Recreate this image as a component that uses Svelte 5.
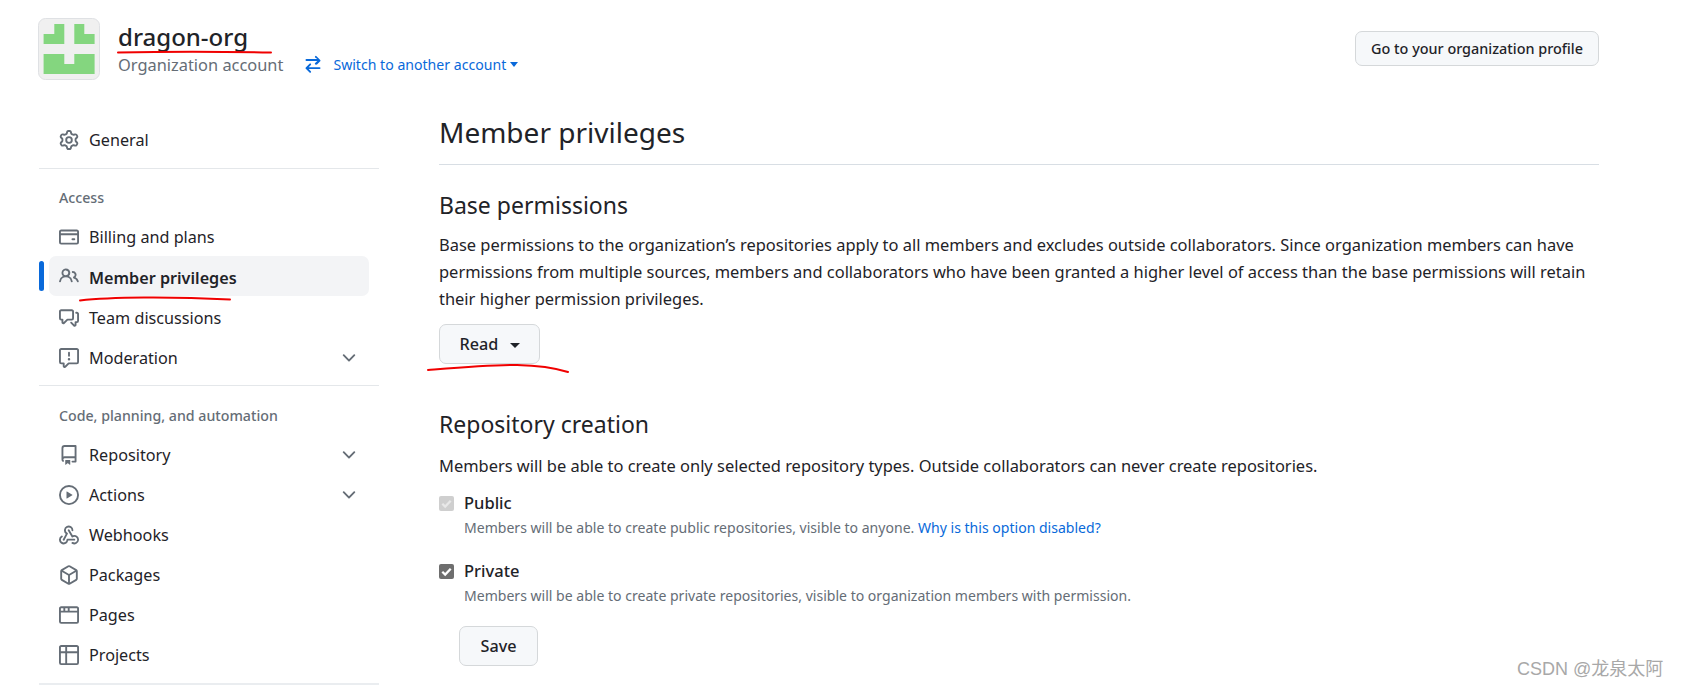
<script>
  const icons = {
    gear: 'M8 0a8.2 8.2 0 0 1 .701.031C9.444.095 9.99.645 10.16 1.29l.288 1.107c.018.066.079.158.212.224.231.114.454.243.668.386.123.082.233.09.299.071l1.103-.303c.644-.176 1.392.021 1.82.63.27.385.506.792.704 1.218.315.675.111 1.422-.364 1.891l-.814.806c-.049.048-.098.147-.088.294.016.257.016.515 0 .772-.01.147.038.246.088.294l.814.806c.475.469.679 1.216.364 1.891a7.977 7.977 0 0 1-.704 1.217c-.428.61-1.176.807-1.82.63l-1.102-.302c-.067-.019-.177-.011-.3.071a5.909 5.909 0 0 1-.668.386c-.133.066-.194.158-.211.224l-.29 1.106c-.168.646-.715 1.196-1.458 1.26a8.006 8.006 0 0 1-1.402 0c-.743-.064-1.289-.614-1.458-1.26l-.289-1.106c-.018-.066-.079-.158-.212-.224a5.738 5.738 0 0 1-.668-.386c-.123-.082-.233-.09-.299-.071l-1.103.303c-.644.176-1.392-.021-1.82-.63a8.12 8.12 0 0 1-.704-1.218c-.315-.675-.111-1.422.363-1.891l.815-.806c.05-.048.098-.147.088-.294a6.214 6.214 0 0 1 0-.772c.01-.147-.038-.246-.088-.294l-.815-.806C.635 6.045.431 5.298.746 4.623a7.92 7.92 0 0 1 .704-1.217c.428-.61 1.176-.807 1.82-.63l1.102.302c.067.019.177.011.3-.071.214-.143.437-.272.668-.386.133-.066.194-.158.211-.224l.29-1.106C6.009.645 6.556.095 7.299.03 7.53.01 7.764 0 8 0Zm-.571 1.525c-.036.003-.108.036-.137.146l-.289 1.105c-.147.561-.549.967-.998 1.189-.173.086-.34.183-.5.29-.417.278-.97.423-1.529.27l-1.103-.303c-.109-.03-.175.016-.195.045-.22.312-.412.644-.573.99-.014.031-.021.11.059.19l.815.806c.411.406.562.957.53 1.456a4.709 4.709 0 0 0 0 .582c.032.499-.119 1.05-.53 1.456l-.815.806c-.081.08-.073.159-.059.19.162.346.353.677.573.989.02.03.085.076.195.046l1.102-.303c.56-.153 1.113-.008 1.53.27.161.107.328.204.501.29.447.222.85.629.997 1.189l.289 1.105c.029.109.101.143.137.146a6.6 6.6 0 0 0 1.142 0c.036-.003.108-.036.137-.146l.289-1.105c.147-.561.549-.967.998-1.189.173-.086.34-.183.5-.29.417-.278.97-.423 1.529-.27l1.103.303c.109.029.175-.016.195-.045.22-.313.411-.644.573-.99.014-.031.021-.11-.059-.19l-.815-.806c-.411-.406-.562-.957-.53-1.456a4.709 4.709 0 0 0 0-.582c-.032-.499.119-1.05.53-1.456l.815-.806c.081-.08.073-.159.059-.19a6.464 6.464 0 0 0-.573-.989c-.02-.03-.085-.076-.195-.046l-1.102.303c-.56.153-1.113.008-1.53-.27a4.44 4.44 0 0 0-.501-.29c-.447-.222-.85-.629-.997-1.189l-.289-1.105c-.029-.11-.101-.143-.137-.146a6.6 6.6 0 0 0-1.142 0ZM11 8a3 3 0 1 1-6 0 3 3 0 0 1 6 0ZM9.5 8a1.5 1.5 0 1 0-3.001.001A1.5 1.5 0 0 0 9.5 8Z',
    card: 'M10.75 9a.75.75 0 0 0 0 1.5h1.5a.75.75 0 0 0 0-1.5h-1.5ZM0 3.75C0 2.784.784 2 1.75 2h12.5c.966 0 1.75.784 1.75 1.75v8.5A1.75 1.75 0 0 1 14.25 14H1.75A1.75 1.75 0 0 1 0 12.25ZM14.5 6.5h-13v5.75c0 .138.112.25.25.25h12.5a.25.25 0 0 0 .25-.25Zm0-2.75a.25.25 0 0 0-.25-.25H1.75a.25.25 0 0 0-.25.25V5h13Z',
    people: 'M2 5.5a3.5 3.5 0 1 1 5.898 2.549 5.508 5.508 0 0 1 3.034 4.084.75.75 0 1 1-1.482.235 4 4 0 0 0-7.9 0 .75.75 0 0 1-1.482-.236A5.507 5.507 0 0 1 3.102 8.05 3.493 3.493 0 0 1 2 5.5ZM11 4a3.001 3.001 0 0 1 2.22 5.018 5.01 5.01 0 0 1 2.56 3.012.749.749 0 0 1-.885.954.752.752 0 0 1-.549-.514 3.507 3.507 0 0 0-2.522-2.372.75.75 0 0 1-.574-.73v-.352a.75.75 0 0 1 .416-.672A1.5 1.5 0 0 0 11 5.5.75.75 0 0 1 11 4Zm-5.5-.5a2 2 0 1 0-.001 3.999A2 2 0 0 0 5.5 3.5Z',
    discussion: 'M1.75 1h8.5c.966 0 1.75.784 1.75 1.75v5.5A1.75 1.75 0 0 1 10.25 10H7.061l-2.574 2.573A1.458 1.458 0 0 1 2 11.543V10h-.25A1.75 1.75 0 0 1 0 8.25v-5.5C0 1.784.784 1 1.75 1ZM1.5 2.75v5.5c0 .138.112.25.25.25h1a.75.75 0 0 1 .75.75v2.19l2.72-2.72a.749.749 0 0 1 .53-.22h3.5a.25.25 0 0 0 .25-.25v-5.5a.25.25 0 0 0-.25-.25h-8.5a.25.25 0 0 0-.25.25Zm13 2a.25.25 0 0 0-.25-.25h-.5a.75.75 0 0 1 0-1.5h.5c.966 0 1.75.784 1.75 1.75v5.5A1.75 1.75 0 0 1 14.25 12H14v1.543a1.458 1.458 0 0 1-2.487 1.03L9.22 12.28a.749.749 0 0 1 .326-1.275.749.749 0 0 1 .734.215l2.22 2.22v-2.19a.75.75 0 0 1 .75-.75h1a.25.25 0 0 0 .25-.25Z',
    report: 'M0 1.75C0 .784.784 0 1.75 0h12.5C15.216 0 16 .784 16 1.75v9.5A1.75 1.75 0 0 1 14.25 13H8.06l-2.573 2.573A1.458 1.458 0 0 1 3 14.543V13H1.75A1.75 1.75 0 0 1 0 11.25Zm1.75-.25a.25.25 0 0 0-.25.25v9.5c0 .138.112.25.25.25h2a.75.75 0 0 1 .75.75v2.19l2.72-2.72a.749.749 0 0 1 .53-.22h6.5a.25.25 0 0 0 .25-.25v-9.5a.25.25 0 0 0-.25-.25Zm7 2.25v2.5a.75.75 0 0 1-1.5 0v-2.5a.75.75 0 0 1 1.5 0ZM9 9a1 1 0 1 1-2 0 1 1 0 0 1 2 0Z',
    repo: 'M2 2.5A2.5 2.5 0 0 1 4.5 0h8.75a.75.75 0 0 1 .75.75v12.5a.75.75 0 0 1-.75.75h-2.5a.75.75 0 0 1 0-1.5h1.75v-2h-8a1 1 0 0 0-.714 1.7.75.75 0 1 1-1.072 1.05A2.495 2.495 0 0 1 2 11.5Zm10.5-1h-8a1 1 0 0 0-1 1v6.708A2.486 2.486 0 0 1 4.5 9h8ZM5 12.25a.25.25 0 0 1 .25-.25h3.5a.25.25 0 0 1 .25.25v3.25a.25.25 0 0 1-.4.2l-1.45-1.087a.249.249 0 0 0-.3 0L5.4 15.7a.25.25 0 0 1-.4-.2Z',
    play: 'M8 0a8 8 0 1 1 0 16A8 8 0 0 1 8 0ZM1.5 8a6.5 6.5 0 1 0 13 0 6.5 6.5 0 0 0-13 0Zm4.879-2.773 4.264 2.559a.25.25 0 0 1 0 .428l-4.264 2.559A.25.25 0 0 1 6 10.559V5.442a.25.25 0 0 1 .379-.215Z',
    webhook: 'M5.5 4.25a2.25 2.25 0 0 1 4.5 0 .75.75 0 0 0 1.5 0 3.75 3.75 0 1 0-6.14 2.889l-2.272 4.258a.75.75 0 0 0 1.324.706L7 7.25a.75.75 0 0 0-.309-1.015A2.25 2.25 0 0 1 5.5 4.25ZM7.364 3.607a.75.75 0 0 1 1.03.257l2.608 4.349a3.75 3.75 0 1 1-.628 6.785.75.75 0 0 1 .752-1.299 2.25 2.25 0 1 0-.033-3.88.75.75 0 0 1-1.03-.256L7.107 4.636a.75.75 0 0 1 .257-1.03ZM2.9 8.776A.75.75 0 0 1 2.625 9.8 2.25 2.25 0 1 0 6 11.75a.75.75 0 0 1 .75-.751h5.5a.75.75 0 0 1 0 1.5H7.425a3.751 3.751 0 1 1-5.55-3.998.75.75 0 0 1 1.024.274Z',
    package: 'm8.878.392 5.25 3.045c.54.314.872.89.872 1.514v6.098a1.75 1.75 0 0 1-.872 1.514l-5.25 3.045a1.75 1.75 0 0 1-1.756 0l-5.25-3.045A1.75 1.75 0 0 1 1 11.049V4.951c0-.624.332-1.201.872-1.514L7.122.392a1.75 1.75 0 0 1 1.756 0ZM7.875 1.69l-4.63 2.685L8 7.133l4.755-2.758-4.63-2.685a.248.248 0 0 0-.25 0ZM2.5 5.677v5.372c0 .09.047.171.125.216l4.625 2.683V8.432Zm6.25 8.271 4.625-2.683a.25.25 0 0 0 .125-.216V5.677L8.75 8.432Z',
    browser: 'M0 2.75C0 1.784.784 1 1.75 1h12.5c.966 0 1.75.784 1.75 1.75v10.5A1.75 1.75 0 0 1 14.25 15H1.75A1.75 1.75 0 0 1 0 13.25ZM14.5 6h-13v7.25c0 .138.112.25.25.25h12.5a.25.25 0 0 0 .25-.25Zm-6-3.5v2h6V2.75a.25.25 0 0 0-.25-.25ZM5 2.5v2h2v-2Zm-3.25 0a.25.25 0 0 0-.25.25V4.5h2v-2Z',
    table: 'M0 1.75C0 .784.784 0 1.75 0h12.5C15.216 0 16 .784 16 1.75v12.5A1.75 1.75 0 0 1 14.25 16H1.75A1.75 1.75 0 0 1 0 14.25ZM6.5 6.5v8h7.75a.25.25 0 0 0 .25-.25V6.5Zm8-1.5V1.75a.25.25 0 0 0-.25-.25H6.5V5Zm-13 1.5v7.75c0 .138.112.25.25.25H5v-8ZM5 5V1.5H1.75a.25.25 0 0 0-.25.25V5Z'
  };
  const chevron = 'M12.78 5.22a.749.749 0 0 1 0 1.06l-4.25 4.25a.749.749 0 0 1-1.06 0L3.22 6.28a.749.749 0 1 1 1.06-1.06L8 8.939l3.72-3.719a.749.749 0 0 1 1.06 0Z';
  const swap = 'M5.22 14.78a.75.75 0 0 0 1.06-1.06L4.56 12h8.69a.75.75 0 0 0 0-1.5H4.56l1.72-1.72a.75.75 0 0 0-1.06-1.06l-3 3a.75.75 0 0 0 0 1.06l3 3Zm5.56-6.5a.75.75 0 1 1-1.06-1.06l1.72-1.72H2.75a.75.75 0 0 1 0-1.5h8.69L9.72 2.78a.75.75 0 0 1 1.06-1.06l3 3a.75.75 0 0 1 0 1.06l-3 3Z';

  const accessItems = [
    { label: 'Billing and plans', icon: 'card' },
    { label: 'Member privileges', icon: 'people', active: true },
    { label: 'Team discussions', icon: 'discussion' },
    { label: 'Moderation', icon: 'report', more: true }
  ];
  const codeItems = [
    { label: 'Repository', icon: 'repo', more: true },
    { label: 'Actions', icon: 'play', more: true },
    { label: 'Webhooks', icon: 'webhook' },
    { label: 'Packages', icon: 'package' },
    { label: 'Pages', icon: 'browser' },
    { label: 'Projects', icon: 'table' }
  ];
</script>

{#snippet navRow(item)}
  <div class="nav-row" class:active={item.active}>
    <svg class="nav-icon" viewBox="0 0 16 16"><path d={icons[item.icon]} /></svg>
    <span class="nav-label">{item.label}</span>
    {#if item.more}
      <svg class="chev" viewBox="0 0 16 16"><path d={chevron} /></svg>
    {/if}
  </div>
{/snippet}

<div class="page">
  <header class="top">
    <svg class="avatar" viewBox="0 0 62 62">
      <rect x="0.5" y="0.5" width="61" height="61" rx="7" fill="#f0f0f0" stroke="#dfe1e4" />
      <g fill="#84d67f">
        <polygon points="16.3,6 26.3,6 26.3,26 5.6,26 5.6,16 16.3,16" />
        <polygon points="36.3,6 46.3,6 46.3,16 56.6,16 56.6,26 36.3,26" />
        <polygon points="5.6,36 26.3,36 26.3,46 36.3,46 36.3,36 56.6,36 56.6,56 5.6,56" />
      </g>
    </svg>
    <div class="org">
      <div class="org-name">dragon-org</div>
      <div class="org-sub">
        <span class="org-type">Organization account</span>
        <svg class="swap" viewBox="0 0 16 16"><path d={swap} /></svg>
        <span class="switch">Switch to another account</span>
        <span class="caret small"></span>
      </div>
    </div>
    <button class="btn profile">Go to your organization profile</button>
  </header>

  <div class="body">
    <nav class="side">
      <div class="nav-row"><svg class="nav-icon" viewBox="0 0 16 16"><path d={icons.gear} /></svg><span class="nav-label">General</span></div>
      <hr class="side-rule first" />
      <div class="side-title access">Access</div>
      {#each accessItems as item}
        {@render navRow(item)}
      {/each}
      <hr class="side-rule mid" />
      <div class="side-title">Code, planning, and automation</div>
      {#each codeItems as item}
        {@render navRow(item)}
      {/each}
      <hr class="side-rule heavy" />
    </nav>

    <main class="content">
      <h1>Member privileges</h1>
      <h2 class="base">Base permissions</h2>
      <p class="para">Base permissions to the organization’s repositories apply to all members and excludes outside collaborators. Since organization members can have permissions from multiple sources, members and collaborators who have been granted a higher level of access than the base permissions will retain their higher permission privileges.</p>
      <button class="btn read">Read <span class="caret dark"></span></button>

      <h2 class="creation">Repository creation</h2>
      <p class="lead">Members will be able to create only selected repository types. Outside collaborators can never create repositories.</p>

      <div class="check-row">
        <span class="box disabled"><svg viewBox="0 0 16 16"><path d="M3.5 8.2 6.6 11.3 12.5 5" /></svg></span>
        <div>
          <div class="check-label">Public</div>
          <div class="check-note">Members will be able to create public repositories, visible to anyone. <span class="link">Why is this option disabled?</span></div>
        </div>
      </div>
      <div class="check-row second">
        <span class="box"><svg viewBox="0 0 16 16"><path d="M3.5 8.2 6.6 11.3 12.5 5" /></svg></span>
        <div>
          <div class="check-label">Private</div>
          <div class="check-note">Members will be able to create private repositories, visible to organization members with permission.</div>
        </div>
      </div>
      <button class="btn save">Save</button>
    </main>
  </div>

  <!-- hand drawn annotations on top of the screenshot -->
  <svg class="marks" viewBox="0 0 1682 685">
    <path d="M118 52.5 C 160 51.5 225 51.5 271 52.5" />
    <path d="M80 300.5 C 110 297 170 296.5 230 299.5" />
    <path d="M428 370 C 460 367.5 490 365 517 365 C 540 365.5 555 368 568 372" />
  </svg>

  <div class="watermark">CSDN @龙泉太阿</div>
</div>

<style>
  :global(body) {
    margin: 0;
    background: #fff;
  }

  .page {
    position: relative;
    width: 1682px;
    height: 685px;
    overflow: hidden;
    box-sizing: border-box;
    padding: 18px 83px 0 38px;
    font-family: "Noto Sans", "Liberation Sans", sans-serif;
    font-size: 16.2px;
    color: #1f2328;
  }

  .top {
    display: flex;
    align-items: flex-start;
    height: 102px;
  }

  .avatar {
    width: 62px;
    height: 62px;
    flex: none;
  }

  .org {
    margin-left: 18px;
    flex: 1;
  }

  .org-name {
    font-size: 24px;
    font-weight: 500;
    line-height: 36px;
    margin-top: 1px;
  }

  .org-sub {
    display: flex;
    align-items: center;
    height: 24px;
    margin-top: -3px;
  }

  .org-type {
    color: #656d76;
    font-size: 16.4px;
  }

  .swap {
    width: 20px;
    height: 20px;
    fill: #0969da;
    margin: 0 10px 0 20px;
  }

  .switch {
    color: #0969da;
    font-size: 14.1px;
  }

  .caret {
    display: inline-block;
    width: 0;
    height: 0;
    border-top: 5px solid #0969da;
    border-left: 4.5px solid transparent;
    border-right: 4.5px solid transparent;
    margin-left: 4px;
  }

  .caret.dark {
    border-top-color: #1f2328;
    border-left-width: 5px;
    border-right-width: 5px;
    margin-left: 7px;
    vertical-align: 2px;
  }

  .btn {
    font-family: inherit;
    font-size: 16.2px;
    font-weight: 500;
    color: #1f2328;
    background: #f6f8fa;
    border: 1px solid #d5d8da;
    border-radius: 7px;
    box-sizing: border-box;
    padding: 0;
  }

  .profile {
    width: 244px;
    height: 35px;
    margin-top: 13px;
    font-size: 14.4px;
  }

  .body {
    display: flex;
  }

  .side {
    width: 340px;
    margin-left: 1px;
    flex: none;
  }

  .nav-row {
    display: flex;
    align-items: center;
    height: 40px;
    margin: 0 10px;
    padding: 0 10px;
    border-radius: 7px;
    position: relative;
  }

  .nav-row.active {
    background: #f3f4f6;
    font-weight: 600;
    margin-top: -1px;
    margin-bottom: 2px;
  }

  .nav-row.active .nav-label {
    padding-top: 3px;
  }

  .nav-row.active::before {
    content: "";
    position: absolute;
    left: -10px;
    top: 5px;
    width: 5px;
    height: 30px;
    border-radius: 3px;
    background: #0969da;
  }

  .nav-icon {
    width: 20px;
    height: 20px;
    fill: #656d76;
    flex: none;
    margin-right: 10px;
  }

  .nav-label {
    flex: 1;
  }

  .chev {
    width: 20px;
    height: 20px;
    fill: #656d76;
    flex: none;
  }

  .side-rule {
    border: 0;
    height: 1px;
    background: #e4e7ea;
    margin: 8px 0 0;
  }

  .side-rule.mid {
    margin-top: 7px;
  }

  .side-rule.heavy {
    height: 2px;
    background: #eaedf0;
  }

  .side-title {
    font-size: 14.2px;
    font-weight: 500;
    color: #656d76;
    line-height: 20px;
    margin: 20px 0 9px 20px;
  }

  .side-title.access {
    margin-top: 19px;
  }

  .content {
    margin-left: 60px;
    flex: 1;
    min-width: 0;
  }

  h1 {
    font-size: 28px;
    font-weight: 400;
    line-height: 40px;
    margin: -8px 0 0;
    padding-bottom: 12px;
    border-bottom: 1px solid #d8dee4;
  }

  h2 {
    font-size: 23px;
    font-weight: 400;
    line-height: 30px;
    margin: 0;
  }

  .base {
    margin-top: 25px;
  }

  .para {
    margin: 12px 0 0;
    font-size: 16.45px;
    line-height: 26.8px;
  }

  .read {
    display: block;
    width: 101px;
    height: 40px;
    margin-top: 11.6px;
  }

  .creation {
    margin-top: 45px;
  }

  .lead {
    margin: 13px 0 0;
    font-size: 16.45px;
    line-height: 27px;
  }

  .check-row {
    display: flex;
    margin-top: 12px;
  }

  .check-row.second {
    margin-top: 19px;
  }

  .box {
    width: 15px;
    height: 15px;
    margin: 5px 10px 0 0;
    border-radius: 2px;
    background: #6e6e6e;
    flex: none;
  }

  .box svg {
    display: block;
    fill: none;
    stroke: #fff;
    stroke-width: 2.4;
  }

  .box.disabled {
    background: #cfcfcf;
  }

  .box.disabled svg {
    stroke: #e8e8e8;
  }

  .check-label {
    font-size: 16.5px;
    font-weight: 500;
    line-height: 24px;
  }

  .check-note {
    font-size: 14.05px;
    color: #656d76;
    line-height: 24px;
    margin-top: 1px;
  }

  .link {
    color: #0969da;
  }

  .save {
    display: block;
    width: 79px;
    height: 40px;
    margin: 18px 0 0 20px;
  }

  .marks {
    position: absolute;
    left: 0;
    top: 0;
    width: 1682px;
    height: 685px;
    pointer-events: none;
    fill: none;
    stroke: #f00000;
    stroke-width: 2;
    stroke-linecap: round;
  }

  .watermark {
    position: absolute;
    left: 1517px;
    top: 654px;
    font-family: "Liberation Sans", "Noto Sans CJK SC", sans-serif;
    font-size: 18px;
    color: #a8a8a8;
    white-space: nowrap;
  }
</style>
